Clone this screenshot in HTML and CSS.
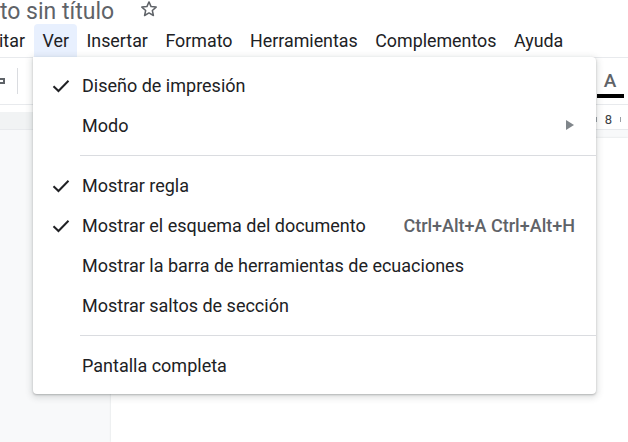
FILE: index.html
```html
<!DOCTYPE html>
<html lang="es">
<head>
<meta charset="utf-8">
<link rel="stylesheet" href="styles.css">
</head>
<body>
<div class="app">
  <div class="titlebar">
    <span class="doc-title">to sin título</span>
    <svg class="star" width="20" height="20" viewBox="0 0 24 24"><path d="M12 3.5l2.5 5.6 6.1.6-4.6 4.1 1.3 6-5.3-3.1-5.3 3.1 1.3-6-4.6-4.1 6.1-.6z" fill="none" stroke="#5f6368" stroke-width="1.8" stroke-linejoin="round"/></svg>
  </div>
  <nav class="menubar">
    <span class="menu-item">itar</span>
    <span class="menu-item active">Ver</span>
    <span class="menu-item">Insertar</span>
    <span class="menu-item">Formato</span>
    <span class="menu-item">Herramientas</span>
    <span class="menu-item">Complementos</span>
    <span class="menu-item">Ayuda</span>
  </nav>
  <div class="toolbar">
    <div class="tb-left">
      <span class="tb-icon"></span>
      <span class="tb-sep"></span>
    </div>
    <div class="tb-right">
      <span class="text-color">A</span>
      <span class="color-bar"></span>
    </div>
  </div>
  <div class="ruler">
    <div class="ruler-margin"></div>
    <div class="ruler-body">
      <span class="tick"></span><span class="ruler-num">8</span><span class="tick"></span>
    </div>
  </div>
  <div class="workspace">
    <div class="gutter"></div>
    <div class="page"></div>
  </div>

  <div class="dropdown">
    <div class="dd-item"><svg class="check" width="18" height="14" viewBox="0 0 18 14"><path d="M1.5 7.2 L6.5 12 L16.5 1.8" fill="none" stroke="#202124" stroke-width="2"/></svg><span class="label">Diseño de impresión</span></div>
    <div class="dd-item"><span class="label">Modo</span><svg class="sub" width="8" height="10" viewBox="0 0 8 10"><path d="M0 0 L8 5 L0 10z" fill="#80868b"/></svg></div>
    <div class="dd-sep"></div>
    <div class="dd-item"><svg class="check" width="18" height="14" viewBox="0 0 18 14"><path d="M1.5 7.2 L6.5 12 L16.5 1.8" fill="none" stroke="#202124" stroke-width="2"/></svg><span class="label">Mostrar regla</span></div>
    <div class="dd-item"><svg class="check" width="18" height="14" viewBox="0 0 18 14"><path d="M1.5 7.2 L6.5 12 L16.5 1.8" fill="none" stroke="#202124" stroke-width="2"/></svg><span class="label">Mostrar el esquema del documento</span><span class="shortcut">Ctrl+Alt+A Ctrl+Alt+H</span></div>
    <div class="dd-item"><span class="label">Mostrar la barra de herramientas de ecuaciones</span></div>
    <div class="dd-item"><span class="label">Mostrar saltos de sección</span></div>
    <div class="dd-sep"></div>
    <div class="dd-item"><span class="label">Pantalla completa</span></div>
  </div>
</div>
</body>
</html>
```

FILE: styles.css
```css
* { box-sizing: border-box; }
html, body { margin: 0; padding: 0; }
body {
  width: 628px;
  height: 442px;
  overflow: hidden;
  background: #fff;
  font-family: Roboto, "Liberation Sans", sans-serif;
  color: #202124;
}
.app {
  position: relative;
  width: 628px;
  height: 442px;
  display: flex;
  flex-direction: column;
}
.titlebar {
  height: 24px;
  display: flex;
  align-items: flex-end;
  gap: 25px;
}
.doc-title {
  font-size: 23px;
  line-height: 26px;
  color: #5f6368;
  margin-bottom: -1px;
}
.star { margin-bottom: 5px; }
.menubar {
  height: 33px;
  display: flex;
  gap: 1.5px;
  align-items: stretch;
}
.menu-item {
  display: flex;
  align-items: center;
  padding: 0 8px;
  font-size: 17.85px;
  color: #202124;
}
.menu-item:first-child { padding-left: 0; margin-left: -1px; margin-right: 0; }
.menu-item.active {
  background: #e8f0fe;
  border-radius: 4px 4px 0 0;
}
.toolbar {
  height: 47px;
  border-top: 1px solid #e8eaed;
  display: flex;
  justify-content: space-between;
  align-items: center;
}
.tb-left { display: flex; align-items: center; gap: 12px; }
.tb-icon {
  width: 5px; height: 6px;
  border: 2px solid #5f6368;
  border-left: none;
}
.tb-sep { width: 1px; height: 26px; background: #dadce0; }
.tb-right {
  width: 30px;
  margin-right: 3px;
  display: flex;
  flex-direction: column;
  align-items: center;
  padding-top: 6px;
}
.text-color {
  font-size: 19px;
  line-height: 20px;
  color: #5f6368;
  font-weight: 500;
}
.color-bar { width: 27px; height: 4px; background: #000; margin-top: 3px; }
.ruler {
  height: 25px;
  display: flex;
  align-items: stretch;
  border-top: 1px solid #e8eaed;
}
.ruler-margin { width: 100px; background: #f1f3f4; margin: 7px 0 0; }
.ruler-body {
  flex: 1;
  display: flex;
  justify-content: flex-end;
  align-items: center;
  gap: 8px;
  padding-right: 7px;
  padding-top: 4px;
}
.ruler-num { font-size: 13px; color: #3c4043; }
.tick { width: 1px; height: 5px; background: #9aa0a6; }
.workspace {
  flex: 1;
  display: flex;
  background: #f8f9fa;
  border-top: 1px solid #e8eaed;
}
.gutter { width: 111px; }
.page {
  flex: 1;
  background: #fff;
  margin-top: 8px;
  box-shadow: 0 0 2px rgba(60,64,67,.15);
}
.dropdown {
  position: absolute;
  left: 33px;
  top: 57px;
  width: 563px;
  background: #fff;
  border-radius: 0 4px 4px 4px;
  box-shadow: 0 2px 6px 2px rgba(60,64,67,.15), 0 1px 2px rgba(60,64,67,.3);
  padding: 8px 0 9px;
}
.dd-item {
  height: 40px;
  display: flex;
  align-items: center;
  padding: 0 21px 0 49px;
  position: relative;
  font-size: 18px;
  color: #202124;
}
.dd-item .check { position: absolute; left: 19px; top: 14px; }
.dd-item .label { flex: 1; }
.dd-item .sub { margin-right: 1px; }
.shortcut {
  color: #5f6368;
  font-weight: 500;
  font-size: 18px;
}
.dd-sep {
  height: 20px;
  margin-left: 47px;
  display: flex;
  align-items: center;
}
.dd-sep::before {
  content: "";
  flex: 1;
  height: 1px;
  background: #dadce0;
}
```
